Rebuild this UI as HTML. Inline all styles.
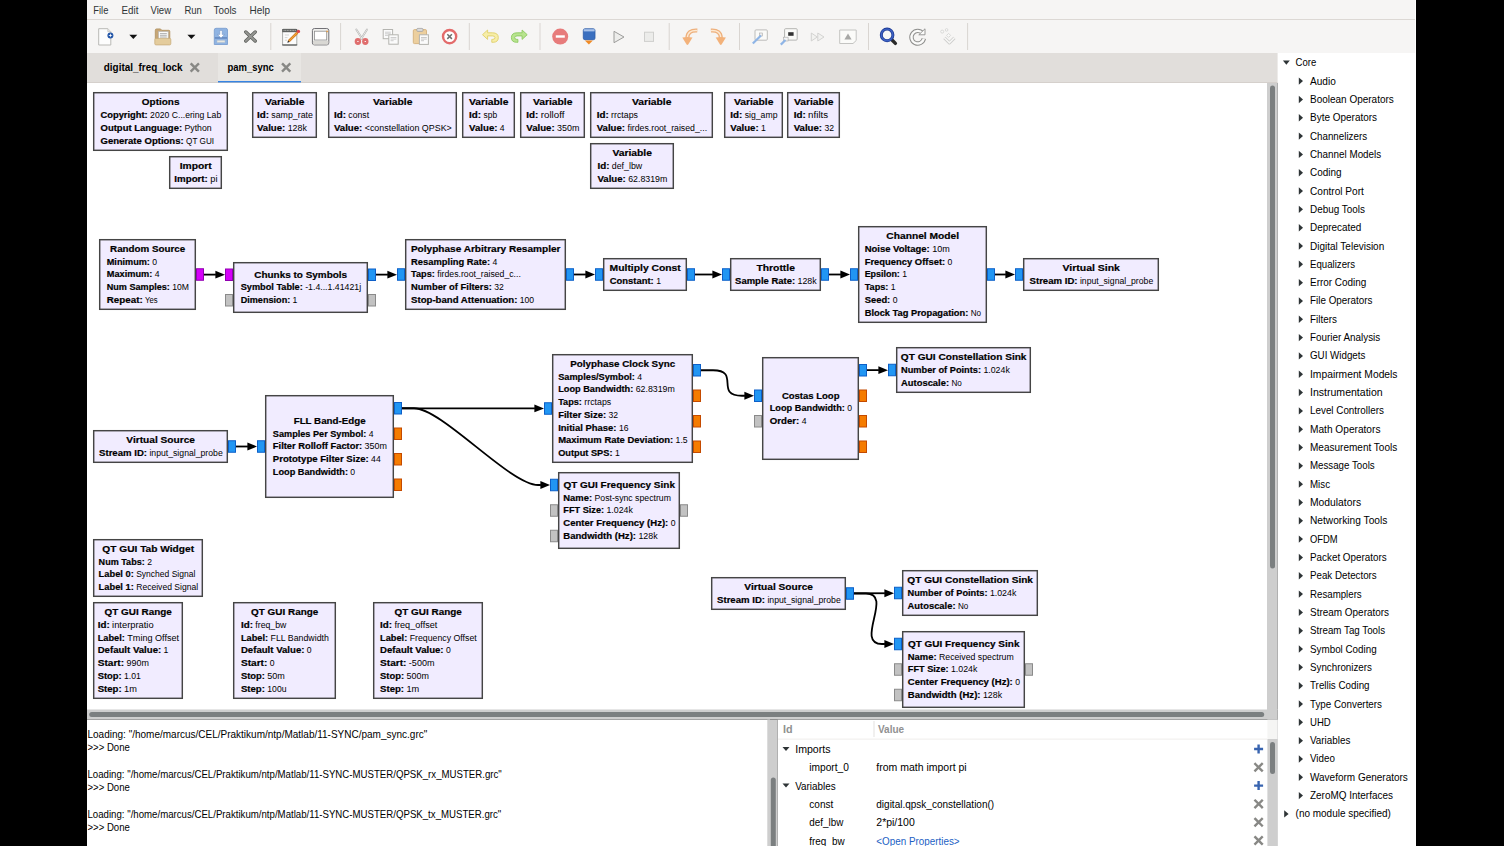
<!DOCTYPE html>
<html><head><meta charset="utf-8"><style>
html,body{margin:0;padding:0;background:#000;width:1504px;height:846px;overflow:hidden}
svg{display:block;font-family:"Liberation Sans",sans-serif}
</style></head><body>
<svg width="1504" height="846" viewBox="0 0 1504 846">
<rect x="0" y="0" width="1504" height="846" fill="#000"/>
<rect x="87" y="0" width="1329" height="53" fill="#f6f5f4"/>
<rect x="87" y="19" width="1329" height="1" fill="#dcd8d4"/>
<text x="93.30" y="13.60" font-size="10.1" fill="#2e3436" textLength="15.07" lengthAdjust="spacingAndGlyphs">File</text>
<text x="121.50" y="13.60" font-size="10.1" fill="#2e3436" textLength="16.87" lengthAdjust="spacingAndGlyphs">Edit</text>
<text x="150.50" y="13.60" font-size="10.1" fill="#2e3436" textLength="20.63" lengthAdjust="spacingAndGlyphs">View</text>
<text x="184.40" y="13.60" font-size="10.1" fill="#2e3436" textLength="17.52" lengthAdjust="spacingAndGlyphs">Run</text>
<text x="213.60" y="13.60" font-size="10.1" fill="#2e3436" textLength="22.93" lengthAdjust="spacingAndGlyphs">Tools</text>
<text x="249.50" y="13.60" font-size="10.1" fill="#2e3436" textLength="20.53" lengthAdjust="spacingAndGlyphs">Help</text>
<rect x="270.3" y="23" width="1" height="27" fill="#d9d5d1"/>
<rect x="340.1" y="23" width="1" height="27" fill="#d9d5d1"/>
<rect x="468.8" y="23" width="1" height="27" fill="#d9d5d1"/>
<rect x="539.5" y="23" width="1" height="27" fill="#d9d5d1"/>
<rect x="668.7" y="23" width="1" height="27" fill="#d9d5d1"/>
<rect x="739.0" y="23" width="1" height="27" fill="#d9d5d1"/>
<rect x="868.0" y="23" width="1" height="27" fill="#d9d5d1"/>
<rect x="967.1" y="23" width="1" height="27" fill="#d9d5d1"/>
<path d="M98.7,28.7 H107.8 L110.8,31.7 V45 H98.7 Z" fill="#fdfdfd" stroke="#b9b9b5" stroke-width="1"/>
<path d="M107.8,28.7 V31.7 H110.8" fill="#e8e8e6" stroke="#c4c4c0" stroke-width="0.8"/>
<circle cx="110.4" cy="35.4" r="3" fill="#2356a8"/>
<path d="M110.4,33.2 L110.9,34.9 L112.6,35.4 L110.9,35.9 L110.4,37.6 L109.9,35.9 L108.2,35.4 L109.9,34.9 Z" fill="#fff"/>
<path d="M129.3,34.8 H137.3 L133.3,39.1 Z" fill="#111"/>
<path d="M187.4,34.8 H195.4 L191.4,39.1 Z" fill="#111"/>
<path d="M155.3,30.3 Q155.3,28.9 156.5,28.9 H160.5 L161.8,30.3 H168.8 Q169.8,30.3 169.8,31.3 V39 H155.3 Z" fill="#c6a677" stroke="#b0915f" stroke-width="0.8"/>
<rect x="158.6" y="31.6" width="9.6" height="7.6" fill="#fafafa" stroke="#b8b8b8" stroke-width="0.6"/>
<path d="M160,33.6 H166.8 M160,35.3 H166.8 M160,37 H166.8" stroke="#9d9d9d" stroke-width="0.8"/>
<path d="M154.8,39.5 Q154.8,38.4 156,38.4 H169.8 Q170.8,38.4 170.8,39.5 V43.8 Q170.8,44.9 169.6,44.9 H156 Q154.8,44.9 154.8,43.8 Z" fill="#e4cc9c" stroke="#c9ad7c" stroke-width="0.8"/>
<path d="M214.3,30 Q214.3,28.3 216,28.3 H225.8 Q227.5,28.3 227.5,30 V44.5 H214.3 Z" fill="#90b4e2" stroke="#7d9fd0" stroke-width="0.9"/>
<rect x="214.8" y="37.3" width="12.2" height="1.3" fill="#5b7fb8"/>
<path d="M219.8,30.4 H222.2 V34.4 H224.6 L221,38 L217.4,34.4 H219.8 Z" fill="#fff" stroke="#6a8cc0" stroke-width="0.5"/>
<rect x="217" y="40.2" width="8" height="2.4" fill="#e8e8e0" stroke="#a9bad0" stroke-width="0.5"/>
<path d="M245.8,32 L255.2,41 M255.2,32 L245.8,41" stroke="#5d5f5b" stroke-width="3.4" stroke-linecap="round"/>
<path d="M245.8,32 L255.2,41 M255.2,32 L245.8,41" stroke="#959692" stroke-width="1.8" stroke-linecap="round"/>
<rect x="282.6" y="29.2" width="14.2" height="16" rx="0.8" fill="#fcfcfc" stroke="#a9aba8" stroke-width="1"/>
<rect x="282.2" y="29" width="15" height="3.2" fill="#5f6160"/>
<path d="M283.6,30.4 H296" stroke="#c9cbc8" stroke-width="0.8" stroke-dasharray="1,0.6"/>
<rect x="282.2" y="44.4" width="15" height="1.1" fill="#4f5150"/>
<path d="M284.8,35 H289 M284.8,37.6 H287.5 M284.8,40.2 H287" stroke="#c3c3c3" stroke-width="0.7"/>
<path d="M288.8,41.2 L297.4,32.6" stroke="#c06a10" stroke-width="2.6"/>
<path d="M288.8,41.2 L297.4,32.6" stroke="#f2a23a" stroke-width="1.4"/>
<circle cx="298.4" cy="31.4" r="1.7" fill="#e0454a"/>
<path d="M287.3,42.8 L288,40.4 L289.7,42.1 Z" fill="#222"/>
<rect x="312.4" y="28.5" width="16.4" height="16.4" rx="2" fill="#f0f0ee" stroke="#727176" stroke-width="1"/>
<rect x="314.5" y="31.2" width="12.2" height="8.8" fill="#fff" stroke="#8e8e8e" stroke-width="0.8"/>
<rect x="313" y="41" width="15.3" height="3.5" fill="#d9d8d4"/>
<rect x="326.4" y="30.7" width="1.5" height="1.5" fill="#f0a040"/>
<path d="M356.3,29.5 L362.2,38.8 M367,29.5 L361.2,38.8" stroke="#b0b0ae" stroke-width="1.8" stroke-linecap="round"/>
<path d="M356.3,29.5 L362.2,38.8 M367,29.5 L361.2,38.8" stroke="#f4f4f2" stroke-width="0.8" stroke-linecap="round"/>
<ellipse cx="357.9" cy="41.5" rx="3.2" ry="3.4" fill="#e06e6e"/>
<ellipse cx="365.3" cy="41.5" rx="3.2" ry="3.4" fill="#e06e6e"/>
<rect x="357.2" y="41" width="1.4" height="0.9" fill="#fff"/><rect x="364.6" y="41" width="1.4" height="0.9" fill="#fff"/>
<rect x="383.2" y="29.5" width="9.4" height="9.2" fill="#fbfbfb" stroke="#b4b4b0" stroke-width="1"/>
<path d="M385,32.2 H390.8 M385,33.8 H390.8 M385,35.4 H388" stroke="#c8c8c8" stroke-width="0.9"/>
<rect x="388.8" y="34.8" width="9.4" height="9.4" fill="#fbfbfb" stroke="#b4b4b0" stroke-width="1"/>
<path d="M390.6,37.5 H396.4 M390.6,39.1 H396.4 M390.6,40.7 H393.6" stroke="#c8c8c8" stroke-width="0.9"/>
<rect x="413.3" y="29.6" width="13.2" height="14" rx="1.2" fill="#eccf9e" stroke="#d4b07a" stroke-width="0.9"/>
<rect x="416.8" y="28.4" width="6.2" height="3" rx="1" fill="#dcdcdc" stroke="#999" stroke-width="0.7"/>
<rect x="419.4" y="34.8" width="9" height="9.6" fill="#fbfbfb" stroke="#b4b4b0" stroke-width="1"/>
<path d="M421,37.5 H426.8 M421,39.1 H426.8 M421,40.7 H424" stroke="#c4c4c4" stroke-width="0.9"/>
<circle cx="449.6" cy="36.6" r="6.6" fill="#fff" stroke="#e36b6b" stroke-width="2.4"/>
<path d="M447.3,34.3 L451.9,38.9 M451.9,34.3 L447.3,38.9" stroke="#6e6e6e" stroke-width="1.5"/>
<path d="M482.5,34.7 L487.6,30 V32.8 H492.5 Q498.3,32.8 498.3,37.6 Q498.3,42.3 493,42.3 H491.8 V39.4 H492.8 Q495,39.4 495,37.6 Q495,35.9 492.6,35.9 H487.6 V39.4 Z" fill="#f7eea8" stroke="#e0cf6a" stroke-width="0.9"/>
<path d="M527.2,34.7 L522.1,30 V32.8 H517.2 Q511.4,32.8 511.4,37.6 Q511.4,42.3 516.7,42.3 H517.9 V39.4 H516.9 Q514.7,39.4 514.7,37.6 Q514.7,35.9 517.1,35.9 H522.1 V39.4 Z" fill="#b8e48e" stroke="#8cc860" stroke-width="0.9"/>
<circle cx="560.2" cy="36.6" r="8" fill="#e77b7b"/>
<rect x="555.8" y="35.3" width="9" height="2.4" fill="#fff"/>
<rect x="583.3" y="28.8" width="11.7" height="10.9" rx="1.6" fill="#3a6fbf" stroke="#2b5aa6" stroke-width="0.8"/>
<rect x="583.7" y="29.2" width="10.9" height="2.2" fill="#a9c3ea"/>
<path d="M584.9,40.6 H592.9 L588.9,44.6 Z" fill="#f08a24"/>
<path d="M614,31.3 L624,37 L614,42.7 Z" fill="#ededeb" stroke="#9c9c9a" stroke-width="1"/>
<rect x="644.5" y="32.2" width="9" height="9.2" fill="#ececea" stroke="#cfcfcd" stroke-width="1"/>
<path d="M697.3,30.6 Q687.4,30 687.4,38" fill="none" stroke="#eeb07c" stroke-width="4"/>
<path d="M697.3,30.6 Q687.4,30 687.4,38" fill="none" stroke="#fde9d2" stroke-width="1.4"/>
<path d="M682.3,37.6 Q687.4,36.2 692.5,37.6 L688.2,44.6 Q687.4,45.4 686.6,44.6 Z" fill="#f3b27a"/>
<path d="M710.9,30.6 Q720.8,30 720.8,38" fill="none" stroke="#eeb07c" stroke-width="4"/>
<path d="M710.9,30.6 Q720.8,30 720.8,38" fill="none" stroke="#fde9d2" stroke-width="1.4"/>
<path d="M715.7,37.6 Q720.8,36.2 725.9,37.6 L721.6,44.6 Q720.8,45.4 720,44.6 Z" fill="#f3b27a"/>
<rect x="755" y="29.9" width="12.3" height="10.3" rx="1" fill="#fafaf8" stroke="#bcbcba" stroke-width="1"/>
<rect x="759.5" y="33" width="3" height="3" fill="#eee" stroke="#aaa" stroke-width="0.6"/>
<path d="M752.8,43.5 L761,35.5" stroke="#8fb5e6" stroke-width="2.2"/>
<rect x="784.6" y="28.7" width="12.6" height="11.4" rx="1" fill="#fafaf8" stroke="#b4b4b2" stroke-width="1"/>
<rect x="788.2" y="32.2" width="5.4" height="3.6" fill="#333"/>
<rect x="783.5" y="37.2" width="4.6" height="3.8" fill="#f4f4f4" stroke="#aaa" stroke-width="0.6"/>
<path d="M780.8,44.6 L785.5,40" stroke="#8fb5e6" stroke-width="2.2"/>
<path d="M811.3,33 L817.3,37 L811.3,41 Z M817.8,33 L824,37 L817.8,41 Z" fill="#f2f2f0" stroke="#cfcfcd" stroke-width="0.9"/>
<path d="M839.7,30 H856.2 V40.5 L853,43.5 H839.7 Z" fill="#fbfbf9" stroke="#c4c4c2" stroke-width="1"/>
<path d="M848,33.4 L851.6,39.6 H844.4 Z" fill="#a8a8a6"/>
<path d="M891.8,39.7 L895.4,43.4" stroke="#2a2a2a" stroke-width="3.4" stroke-linecap="round"/>
<circle cx="887.1" cy="34.9" r="5.8" fill="#f7f7f6" stroke="#1f3c96" stroke-width="3"/>
<circle cx="887.1" cy="34.9" r="5.8" fill="none" stroke="#3d62c4" stroke-width="1.4"/>
<path d="M922.6,33.2 A6.3,6.3 0 1 0 923.9,38.6" fill="none" stroke="#8f8f8d" stroke-width="4.4"/>
<path d="M922.6,33.2 A6.3,6.3 0 1 0 923.9,38.6" fill="none" stroke="#fbfbfa" stroke-width="2.4"/>
<path d="M918.8,34.8 L925,34.8 L925,28.8 Z" fill="#fbfbfa" stroke="#8f8f8d" stroke-width="0.9" stroke-linejoin="round"/>
<circle cx="942.2" cy="31.6" r="1.5" fill="#f8f8f7" stroke="#d2d2d0" stroke-width="0.8"/>
<circle cx="946.6" cy="29.9" r="1.3" fill="#f8f8f7" stroke="#d2d2d0" stroke-width="0.8"/>
<path d="M948.6,33.4 L950.6,35.4 L948.6,37.4 L946.6,35.4 Z" fill="#f8f8f7" stroke="#d2d2d0" stroke-width="0.8"/>
<path d="M944.4,37.8 L949.4,42.8 L954.4,37.8" fill="none" stroke="#cfcfcd" stroke-width="3.2" stroke-linejoin="round"/>
<path d="M944.4,37.8 L949.4,42.8 L954.4,37.8" fill="none" stroke="#f8f8f7" stroke-width="1.4"/>
<rect x="87" y="53" width="1191" height="30" fill="#e1dedb"/>
<rect x="218" y="53" width="83" height="30" fill="#e8e6e3"/>
<rect x="218" y="81" width="83" height="2" fill="#3584e4"/>
<rect x="87" y="82" width="1191" height="1" fill="#cdc7c2" opacity="0.6"/>
<text x="103.80" y="71.20" font-size="10.1" font-weight="bold" fill="#000" textLength="78.80" lengthAdjust="spacingAndGlyphs">digital_freq_lock</text>
<text x="227.40" y="71.20" font-size="10.1" font-weight="bold" fill="#000" textLength="46.40" lengthAdjust="spacingAndGlyphs">pam_sync</text>
<path d="M191.5,64.2 L198.10000000000002,70.8 M198.10000000000002,64.2 L191.5,70.8" stroke="#888885" stroke-width="2.4" stroke-linecap="square"/>
<path d="M282.9,64.2 L289.5,70.8 M289.5,64.2 L282.9,70.8" stroke="#888885" stroke-width="2.4" stroke-linecap="square"/>
<rect x="87" y="83" width="1180" height="627" fill="#fff"/>
<rect x="1267" y="83" width="10.6" height="627" fill="#cecece"/>
<rect x="1270" y="85.5" width="5" height="483" rx="2.5" fill="#7b7f80"/>
<rect x="87" y="709.5" width="1190.6" height="10" fill="#cecece"/>
<rect x="89.2" y="712" width="1175" height="5" rx="2.5" fill="#7b7f80"/>
<rect x="93.7" y="92.7" width="133.6" height="57.6" fill="#f1ecff" stroke="#454545" stroke-width="1.45"/>
<rect x="169.7" y="156.7" width="51.6" height="31.6" fill="#f1ecff" stroke="#454545" stroke-width="1.45"/>
<rect x="252.7" y="92.7" width="63.6" height="44.6" fill="#f1ecff" stroke="#454545" stroke-width="1.45"/>
<rect x="328.7" y="92.7" width="127.6" height="44.6" fill="#f1ecff" stroke="#454545" stroke-width="1.45"/>
<rect x="462.7" y="92.7" width="51.6" height="44.6" fill="#f1ecff" stroke="#454545" stroke-width="1.45"/>
<rect x="520.7" y="92.7" width="63.6" height="44.6" fill="#f1ecff" stroke="#454545" stroke-width="1.45"/>
<rect x="590.7" y="92.7" width="121.6" height="44.6" fill="#f1ecff" stroke="#454545" stroke-width="1.45"/>
<rect x="590.7" y="143.7" width="82.6" height="44.6" fill="#f1ecff" stroke="#454545" stroke-width="1.45"/>
<rect x="724.7" y="92.7" width="57.6" height="44.6" fill="#f1ecff" stroke="#454545" stroke-width="1.45"/>
<rect x="787.7" y="92.7" width="51.6" height="44.6" fill="#f1ecff" stroke="#454545" stroke-width="1.45"/>
<rect x="99.7" y="239.7" width="95.6" height="69.6" fill="#f1ecff" stroke="#454545" stroke-width="1.45"/>
<rect x="233.7" y="262.7" width="133.6" height="49.6" fill="#f1ecff" stroke="#454545" stroke-width="1.45"/>
<rect x="405.7" y="239.7" width="159.6" height="69.6" fill="#f1ecff" stroke="#454545" stroke-width="1.45"/>
<rect x="603.7" y="258.7" width="82.6" height="31.6" fill="#f1ecff" stroke="#454545" stroke-width="1.45"/>
<rect x="730.7" y="258.7" width="89.6" height="31.6" fill="#f1ecff" stroke="#454545" stroke-width="1.45"/>
<rect x="858.7" y="226.7" width="127.6" height="95.6" fill="#f1ecff" stroke="#454545" stroke-width="1.45"/>
<rect x="1023.7" y="258.7" width="134.6" height="31.6" fill="#f1ecff" stroke="#454545" stroke-width="1.45"/>
<rect x="93.7" y="430.7" width="133.6" height="31.6" fill="#f1ecff" stroke="#454545" stroke-width="1.45"/>
<rect x="265.7" y="395.7" width="127.6" height="101.6" fill="#f1ecff" stroke="#454545" stroke-width="1.45"/>
<rect x="552.7" y="354.7" width="139.6" height="107.6" fill="#f1ecff" stroke="#454545" stroke-width="1.45"/>
<rect x="762.7" y="357.7" width="95.6" height="101.6" fill="#f1ecff" stroke="#454545" stroke-width="1.45"/>
<rect x="896.7" y="347.7" width="133.6" height="44.6" fill="#f1ecff" stroke="#454545" stroke-width="1.45"/>
<rect x="558.7" y="472.7" width="120.6" height="75.6" fill="#f1ecff" stroke="#454545" stroke-width="1.45"/>
<rect x="93.7" y="539.7" width="108.6" height="56.6" fill="#f1ecff" stroke="#454545" stroke-width="1.45"/>
<rect x="93.7" y="602.7" width="88.6" height="95.6" fill="#f1ecff" stroke="#454545" stroke-width="1.45"/>
<rect x="233.7" y="602.7" width="101.6" height="95.6" fill="#f1ecff" stroke="#454545" stroke-width="1.45"/>
<rect x="373.7" y="602.7" width="108.6" height="95.6" fill="#f1ecff" stroke="#454545" stroke-width="1.45"/>
<rect x="711.7" y="577.7" width="133.6" height="31.6" fill="#f1ecff" stroke="#454545" stroke-width="1.45"/>
<rect x="902.7" y="570.7" width="134.6" height="44.6" fill="#f1ecff" stroke="#454545" stroke-width="1.45"/>
<rect x="902.7" y="631.7" width="121.6" height="75.6" fill="#f1ecff" stroke="#454545" stroke-width="1.45"/>
<path d="M204.0,274.625 L215.9,274.625" fill="none" stroke="#000" stroke-width="1.8"/>
<path d="M225.0,274.625 L215.4,270.725 L215.4,278.525 Z" fill="#000"/>
<path d="M376.0,274.625 L387.9,274.625" fill="none" stroke="#000" stroke-width="1.8"/>
<path d="M397.0,274.625 L387.4,270.725 L387.4,278.525 Z" fill="#000"/>
<path d="M574.0,274.5 L585.9,274.5" fill="none" stroke="#000" stroke-width="1.8"/>
<path d="M595.0,274.5 L585.4,270.6 L585.4,278.4 Z" fill="#000"/>
<path d="M695.0,274.5 L712.9,274.5" fill="none" stroke="#000" stroke-width="1.8"/>
<path d="M722.0,274.5 L712.4,270.6 L712.4,278.4 Z" fill="#000"/>
<path d="M829.0,274.5 L840.9,274.5" fill="none" stroke="#000" stroke-width="1.8"/>
<path d="M850.0,274.5 L840.4,270.6 L840.4,278.4 Z" fill="#000"/>
<path d="M995.0,274.5 L1005.9,274.5" fill="none" stroke="#000" stroke-width="1.8"/>
<path d="M1015.0,274.5 L1005.4,270.6 L1005.4,278.4 Z" fill="#000"/>
<path d="M236.0,446.5 L247.9,446.5" fill="none" stroke="#000" stroke-width="1.8"/>
<path d="M257.0,446.5 L247.4,442.6 L247.4,450.4 Z" fill="#000"/>
<path d="M402.0,408.375 L534.9,408.375" fill="none" stroke="#000" stroke-width="1.8"/>
<path d="M544.0,408.375 L534.4,404.475 L534.4,412.275 Z" fill="#000"/>
<path d="M402.0,408.25 L414.0,408.25 C442.0,408.25 510.0,485.0 538.0,485.0 L540.9,485.0" fill="none" stroke="#000" stroke-width="1.8"/>
<path d="M550.0,485.0 L540.4,481.1 L540.4,488.9 Z" fill="#000"/>
<path d="M701.0,370.25 L713.0,370.25 C741.0,370.25 714.0,395.75 742.0,395.75 L744.9,395.75" fill="none" stroke="#000" stroke-width="1.8"/>
<path d="M754.0,395.75 L744.4,391.85 L744.4,399.65 Z" fill="#000"/>
<path d="M867.0,370.125 L878.9,370.125" fill="none" stroke="#000" stroke-width="1.8"/>
<path d="M888.0,370.125 L878.4,366.225 L878.4,374.025 Z" fill="#000"/>
<path d="M854.0,593.25 L884.9,593.25" fill="none" stroke="#000" stroke-width="1.8"/>
<path d="M894.0,593.25 L884.4,589.35 L884.4,597.15 Z" fill="#000"/>
<path d="M854.0,593.5 L866.0,593.5 C894.0,593.5 854.0,644.0 882.0,644.0 L884.9,644.0" fill="none" stroke="#000" stroke-width="1.8"/>
<path d="M894.0,644.0 L884.4,640.1 L884.4,647.9 Z" fill="#000"/>
<rect x="196.5" y="268.75" width="7.0" height="11.5" fill="#d500f9" stroke="#9000b0" stroke-width="1"/>
<rect x="225.5" y="269.0" width="7.0" height="11.5" fill="#d500f9" stroke="#9000b0" stroke-width="1"/>
<rect x="225.5" y="294.5" width="7.0" height="11.5" fill="#c2c2c2" stroke="#8a8a8a" stroke-width="1"/>
<rect x="368.5" y="269.0" width="7.0" height="11.5" fill="#2196f3" stroke="#0d5fc8" stroke-width="1"/>
<rect x="368.5" y="294.5" width="7.0" height="11.5" fill="#c2c2c2" stroke="#8a8a8a" stroke-width="1"/>
<rect x="397.5" y="268.75" width="7.0" height="11.5" fill="#2196f3" stroke="#0d5fc8" stroke-width="1"/>
<rect x="566.5" y="268.75" width="7.0" height="11.5" fill="#2196f3" stroke="#0d5fc8" stroke-width="1"/>
<rect x="595.5" y="268.75" width="7.0" height="11.5" fill="#2196f3" stroke="#0d5fc8" stroke-width="1"/>
<rect x="687.5" y="268.75" width="7.0" height="11.5" fill="#2196f3" stroke="#0d5fc8" stroke-width="1"/>
<rect x="722.5" y="268.75" width="7.0" height="11.5" fill="#2196f3" stroke="#0d5fc8" stroke-width="1"/>
<rect x="821.5" y="268.75" width="7.0" height="11.5" fill="#2196f3" stroke="#0d5fc8" stroke-width="1"/>
<rect x="850.5" y="268.75" width="7.0" height="11.5" fill="#2196f3" stroke="#0d5fc8" stroke-width="1"/>
<rect x="987.5" y="268.75" width="7.0" height="11.5" fill="#2196f3" stroke="#0d5fc8" stroke-width="1"/>
<rect x="1015.5" y="268.75" width="7.0" height="11.5" fill="#2196f3" stroke="#0d5fc8" stroke-width="1"/>
<rect x="228.5" y="440.75" width="7.0" height="11.5" fill="#2196f3" stroke="#0d5fc8" stroke-width="1"/>
<rect x="257.5" y="440.75" width="7.0" height="11.5" fill="#2196f3" stroke="#0d5fc8" stroke-width="1"/>
<rect x="394.5" y="402.5" width="7.0" height="11.5" fill="#2196f3" stroke="#0d5fc8" stroke-width="1"/>
<rect x="394.5" y="428.0" width="7.0" height="11.5" fill="#f57c00" stroke="#c44a00" stroke-width="1"/>
<rect x="394.5" y="453.5" width="7.0" height="11.5" fill="#f57c00" stroke="#c44a00" stroke-width="1"/>
<rect x="394.5" y="479.0" width="7.0" height="11.5" fill="#f57c00" stroke="#c44a00" stroke-width="1"/>
<rect x="544.5" y="402.75" width="7.0" height="11.5" fill="#2196f3" stroke="#0d5fc8" stroke-width="1"/>
<rect x="693.5" y="364.5" width="7.0" height="11.5" fill="#2196f3" stroke="#0d5fc8" stroke-width="1"/>
<rect x="693.5" y="390.0" width="7.0" height="11.5" fill="#f57c00" stroke="#c44a00" stroke-width="1"/>
<rect x="693.5" y="415.5" width="7.0" height="11.5" fill="#f57c00" stroke="#c44a00" stroke-width="1"/>
<rect x="693.5" y="441.0" width="7.0" height="11.5" fill="#f57c00" stroke="#c44a00" stroke-width="1"/>
<rect x="754.5" y="390.0" width="7.0" height="11.5" fill="#2196f3" stroke="#0d5fc8" stroke-width="1"/>
<rect x="754.5" y="415.5" width="7.0" height="11.5" fill="#c2c2c2" stroke="#8a8a8a" stroke-width="1"/>
<rect x="859.5" y="364.5" width="7.0" height="11.5" fill="#2196f3" stroke="#0d5fc8" stroke-width="1"/>
<rect x="859.5" y="390.0" width="7.0" height="11.5" fill="#f57c00" stroke="#c44a00" stroke-width="1"/>
<rect x="859.5" y="415.5" width="7.0" height="11.5" fill="#f57c00" stroke="#c44a00" stroke-width="1"/>
<rect x="859.5" y="441.0" width="7.0" height="11.5" fill="#f57c00" stroke="#c44a00" stroke-width="1"/>
<rect x="888.5" y="364.25" width="7.0" height="11.5" fill="#2196f3" stroke="#0d5fc8" stroke-width="1"/>
<rect x="550.5" y="479.25" width="7.0" height="11.5" fill="#2196f3" stroke="#0d5fc8" stroke-width="1"/>
<rect x="550.5" y="504.75" width="7.0" height="11.5" fill="#c2c2c2" stroke="#8a8a8a" stroke-width="1"/>
<rect x="550.5" y="530.25" width="7.0" height="11.5" fill="#c2c2c2" stroke="#8a8a8a" stroke-width="1"/>
<rect x="680.5" y="504.75" width="7.0" height="11.5" fill="#c2c2c2" stroke="#8a8a8a" stroke-width="1"/>
<rect x="846.5" y="587.75" width="7.0" height="11.5" fill="#2196f3" stroke="#0d5fc8" stroke-width="1"/>
<rect x="894.5" y="587.25" width="7.0" height="11.5" fill="#2196f3" stroke="#0d5fc8" stroke-width="1"/>
<rect x="894.5" y="638.25" width="7.0" height="11.5" fill="#2196f3" stroke="#0d5fc8" stroke-width="1"/>
<rect x="894.5" y="663.75" width="7.0" height="11.5" fill="#c2c2c2" stroke="#8a8a8a" stroke-width="1"/>
<rect x="894.5" y="689.25" width="7.0" height="11.5" fill="#c2c2c2" stroke="#8a8a8a" stroke-width="1"/>
<rect x="1025.5" y="663.75" width="7.0" height="11.5" fill="#c2c2c2" stroke="#8a8a8a" stroke-width="1"/>
<text x="141.89" y="105.28" font-size="8.9" font-weight="bold" stroke="#000" stroke-width="0.18" fill="#000" textLength="37.61" lengthAdjust="spacingAndGlyphs">Options</text>
<text x="100.56" y="118.03" font-size="8.5" font-weight="bold" stroke="#000" stroke-width="0.18" fill="#000" textLength="47.15" lengthAdjust="spacingAndGlyphs">Copyright:</text>
<text x="150.11" y="118.03" font-size="8.5" fill="#000" textLength="71.13" lengthAdjust="spacingAndGlyphs">2020 C...ering Lab</text>
<text x="100.56" y="130.78" font-size="8.5" font-weight="bold" stroke="#000" stroke-width="0.18" fill="#000" textLength="81.51" lengthAdjust="spacingAndGlyphs">Output Language:</text>
<text x="184.48" y="130.78" font-size="8.5" fill="#000" textLength="27.18" lengthAdjust="spacingAndGlyphs">Python</text>
<text x="100.56" y="143.53" font-size="8.5" font-weight="bold" stroke="#000" stroke-width="0.18" fill="#000" textLength="83.10" lengthAdjust="spacingAndGlyphs">Generate Options:</text>
<text x="186.07" y="143.53" font-size="8.5" fill="#000" textLength="27.98" lengthAdjust="spacingAndGlyphs">QT GUI</text>
<text x="179.70" y="169.03" font-size="8.9" font-weight="bold" stroke="#000" stroke-width="0.18" fill="#000" textLength="32.00" lengthAdjust="spacingAndGlyphs">Import</text>
<text x="174.32" y="181.78" font-size="8.5" font-weight="bold" stroke="#000" stroke-width="0.18" fill="#000" textLength="33.56" lengthAdjust="spacingAndGlyphs">Import:</text>
<text x="210.29" y="181.78" font-size="8.5" fill="#000" textLength="7.19" lengthAdjust="spacingAndGlyphs">pi</text>
<text x="264.93" y="105.15" font-size="8.9" font-weight="bold" stroke="#000" stroke-width="0.18" fill="#000" textLength="39.55" lengthAdjust="spacingAndGlyphs">Variable</text>
<text x="256.92" y="117.90" font-size="8.5" font-weight="bold" stroke="#000" stroke-width="0.18" fill="#000" textLength="12.00" lengthAdjust="spacingAndGlyphs">Id:</text>
<text x="271.32" y="117.90" font-size="8.5" fill="#000" textLength="41.56" lengthAdjust="spacingAndGlyphs">samp_rate</text>
<text x="256.92" y="130.65" font-size="8.5" font-weight="bold" stroke="#000" stroke-width="0.18" fill="#000" textLength="28.34" lengthAdjust="spacingAndGlyphs">Value:</text>
<text x="287.67" y="130.65" font-size="8.5" fill="#000" textLength="19.19" lengthAdjust="spacingAndGlyphs">128k</text>
<text x="372.93" y="105.15" font-size="8.9" font-weight="bold" stroke="#000" stroke-width="0.18" fill="#000" textLength="39.55" lengthAdjust="spacingAndGlyphs">Variable</text>
<text x="333.97" y="117.90" font-size="8.5" font-weight="bold" stroke="#000" stroke-width="0.18" fill="#000" textLength="12.00" lengthAdjust="spacingAndGlyphs">Id:</text>
<text x="348.37" y="117.90" font-size="8.5" fill="#000" textLength="20.78" lengthAdjust="spacingAndGlyphs">const</text>
<text x="333.97" y="130.65" font-size="8.5" font-weight="bold" stroke="#000" stroke-width="0.18" fill="#000" textLength="28.34" lengthAdjust="spacingAndGlyphs">Value:</text>
<text x="364.72" y="130.65" font-size="8.5" fill="#000" textLength="87.10" lengthAdjust="spacingAndGlyphs">&lt;constellation QPSK&gt;</text>
<text x="468.93" y="105.15" font-size="8.9" font-weight="bold" stroke="#000" stroke-width="0.18" fill="#000" textLength="39.55" lengthAdjust="spacingAndGlyphs">Variable</text>
<text x="469.13" y="117.90" font-size="8.5" font-weight="bold" stroke="#000" stroke-width="0.18" fill="#000" textLength="12.00" lengthAdjust="spacingAndGlyphs">Id:</text>
<text x="483.53" y="117.90" font-size="8.5" fill="#000" textLength="13.60" lengthAdjust="spacingAndGlyphs">spb</text>
<text x="469.13" y="130.65" font-size="8.5" font-weight="bold" stroke="#000" stroke-width="0.18" fill="#000" textLength="28.34" lengthAdjust="spacingAndGlyphs">Value:</text>
<text x="499.87" y="130.65" font-size="8.5" fill="#000" textLength="4.81" lengthAdjust="spacingAndGlyphs">4</text>
<text x="532.93" y="105.15" font-size="8.9" font-weight="bold" stroke="#000" stroke-width="0.18" fill="#000" textLength="39.55" lengthAdjust="spacingAndGlyphs">Variable</text>
<text x="526.34" y="117.90" font-size="8.5" font-weight="bold" stroke="#000" stroke-width="0.18" fill="#000" textLength="12.00" lengthAdjust="spacingAndGlyphs">Id:</text>
<text x="540.74" y="117.90" font-size="8.5" fill="#000" textLength="23.68" lengthAdjust="spacingAndGlyphs">rolloff</text>
<text x="526.34" y="130.65" font-size="8.5" font-weight="bold" stroke="#000" stroke-width="0.18" fill="#000" textLength="28.34" lengthAdjust="spacingAndGlyphs">Value:</text>
<text x="557.09" y="130.65" font-size="8.5" fill="#000" textLength="22.38" lengthAdjust="spacingAndGlyphs">350m</text>
<text x="631.93" y="105.15" font-size="8.9" font-weight="bold" stroke="#000" stroke-width="0.18" fill="#000" textLength="39.55" lengthAdjust="spacingAndGlyphs">Variable</text>
<text x="596.73" y="117.90" font-size="8.5" font-weight="bold" stroke="#000" stroke-width="0.18" fill="#000" textLength="12.00" lengthAdjust="spacingAndGlyphs">Id:</text>
<text x="611.13" y="117.90" font-size="8.5" fill="#000" textLength="26.87" lengthAdjust="spacingAndGlyphs">rrctaps</text>
<text x="596.73" y="130.65" font-size="8.5" font-weight="bold" stroke="#000" stroke-width="0.18" fill="#000" textLength="28.34" lengthAdjust="spacingAndGlyphs">Value:</text>
<text x="627.48" y="130.65" font-size="8.5" fill="#000" textLength="79.60" lengthAdjust="spacingAndGlyphs">firdes.root_raised_...</text>
<text x="612.43" y="156.15" font-size="8.9" font-weight="bold" stroke="#000" stroke-width="0.18" fill="#000" textLength="39.55" lengthAdjust="spacingAndGlyphs">Variable</text>
<text x="597.44" y="168.90" font-size="8.5" font-weight="bold" stroke="#000" stroke-width="0.18" fill="#000" textLength="12.00" lengthAdjust="spacingAndGlyphs">Id:</text>
<text x="611.84" y="168.90" font-size="8.5" fill="#000" textLength="30.37" lengthAdjust="spacingAndGlyphs">def_lbw</text>
<text x="597.44" y="181.65" font-size="8.5" font-weight="bold" stroke="#000" stroke-width="0.18" fill="#000" textLength="28.34" lengthAdjust="spacingAndGlyphs">Value:</text>
<text x="628.19" y="181.65" font-size="8.5" fill="#000" textLength="39.16" lengthAdjust="spacingAndGlyphs">62.8319m</text>
<text x="733.93" y="105.15" font-size="8.9" font-weight="bold" stroke="#000" stroke-width="0.18" fill="#000" textLength="39.55" lengthAdjust="spacingAndGlyphs">Variable</text>
<text x="730.31" y="117.90" font-size="8.5" font-weight="bold" stroke="#000" stroke-width="0.18" fill="#000" textLength="12.00" lengthAdjust="spacingAndGlyphs">Id:</text>
<text x="744.72" y="117.90" font-size="8.5" fill="#000" textLength="32.77" lengthAdjust="spacingAndGlyphs">sig_amp</text>
<text x="730.31" y="130.65" font-size="8.5" font-weight="bold" stroke="#000" stroke-width="0.18" fill="#000" textLength="28.34" lengthAdjust="spacingAndGlyphs">Value:</text>
<text x="761.06" y="130.65" font-size="8.5" fill="#000" textLength="4.81" lengthAdjust="spacingAndGlyphs">1</text>
<text x="793.93" y="105.15" font-size="8.9" font-weight="bold" stroke="#000" stroke-width="0.18" fill="#000" textLength="39.55" lengthAdjust="spacingAndGlyphs">Variable</text>
<text x="793.73" y="117.90" font-size="8.5" font-weight="bold" stroke="#000" stroke-width="0.18" fill="#000" textLength="12.00" lengthAdjust="spacingAndGlyphs">Id:</text>
<text x="808.13" y="117.90" font-size="8.5" fill="#000" textLength="19.98" lengthAdjust="spacingAndGlyphs">nfilts</text>
<text x="793.73" y="130.65" font-size="8.5" font-weight="bold" stroke="#000" stroke-width="0.18" fill="#000" textLength="28.34" lengthAdjust="spacingAndGlyphs">Value:</text>
<text x="824.48" y="130.65" font-size="8.5" fill="#000" textLength="9.59" lengthAdjust="spacingAndGlyphs">32</text>
<text x="110.09" y="251.90" font-size="8.9" font-weight="bold" stroke="#000" stroke-width="0.18" fill="#000" textLength="75.21" lengthAdjust="spacingAndGlyphs">Random Source</text>
<text x="106.74" y="264.65" font-size="8.5" font-weight="bold" stroke="#000" stroke-width="0.18" fill="#000" textLength="43.16" lengthAdjust="spacingAndGlyphs">Minimum:</text>
<text x="152.30" y="264.65" font-size="8.5" fill="#000" textLength="4.81" lengthAdjust="spacingAndGlyphs">0</text>
<text x="106.74" y="277.40" font-size="8.5" font-weight="bold" stroke="#000" stroke-width="0.18" fill="#000" textLength="45.56" lengthAdjust="spacingAndGlyphs">Maximum:</text>
<text x="154.70" y="277.40" font-size="8.5" fill="#000" textLength="4.81" lengthAdjust="spacingAndGlyphs">4</text>
<text x="106.74" y="290.15" font-size="8.5" font-weight="bold" stroke="#000" stroke-width="0.18" fill="#000" textLength="63.13" lengthAdjust="spacingAndGlyphs">Num Samples:</text>
<text x="172.27" y="290.15" font-size="8.5" fill="#000" textLength="16.79" lengthAdjust="spacingAndGlyphs">10M</text>
<text x="106.74" y="302.90" font-size="8.5" font-weight="bold" stroke="#000" stroke-width="0.18" fill="#000" textLength="35.97" lengthAdjust="spacingAndGlyphs">Repeat:</text>
<text x="145.11" y="302.90" font-size="8.5" fill="#000" textLength="12.53" lengthAdjust="spacingAndGlyphs">Yes</text>
<text x="254.30" y="277.65" font-size="8.9" font-weight="bold" stroke="#000" stroke-width="0.18" fill="#000" textLength="92.80" lengthAdjust="spacingAndGlyphs">Chunks to Symbols</text>
<text x="240.68" y="290.40" font-size="8.5" font-weight="bold" stroke="#000" stroke-width="0.18" fill="#000" textLength="62.10" lengthAdjust="spacingAndGlyphs">Symbol Table:</text>
<text x="305.18" y="290.40" font-size="8.5" fill="#000" textLength="55.94" lengthAdjust="spacingAndGlyphs">-1.4...1.41421j</text>
<text x="240.68" y="303.15" font-size="8.5" font-weight="bold" stroke="#000" stroke-width="0.18" fill="#000" textLength="49.55" lengthAdjust="spacingAndGlyphs">Dimension:</text>
<text x="292.63" y="303.15" font-size="8.5" fill="#000" textLength="4.81" lengthAdjust="spacingAndGlyphs">1</text>
<text x="410.90" y="251.90" font-size="8.9" font-weight="bold" stroke="#000" stroke-width="0.18" fill="#000" textLength="149.60" lengthAdjust="spacingAndGlyphs">Polyphase Arbitrary Resampler</text>
<text x="411.10" y="264.65" font-size="8.5" font-weight="bold" stroke="#000" stroke-width="0.18" fill="#000" textLength="79.11" lengthAdjust="spacingAndGlyphs">Resampling Rate:</text>
<text x="492.61" y="264.65" font-size="8.5" fill="#000" textLength="4.81" lengthAdjust="spacingAndGlyphs">4</text>
<text x="411.10" y="277.40" font-size="8.5" font-weight="bold" stroke="#000" stroke-width="0.18" fill="#000" textLength="23.75" lengthAdjust="spacingAndGlyphs">Taps:</text>
<text x="437.26" y="277.40" font-size="8.5" fill="#000" textLength="83.60" lengthAdjust="spacingAndGlyphs">firdes.root_raised_c...</text>
<text x="411.10" y="290.15" font-size="8.5" font-weight="bold" stroke="#000" stroke-width="0.18" fill="#000" textLength="80.71" lengthAdjust="spacingAndGlyphs">Number of Filters:</text>
<text x="494.22" y="290.15" font-size="8.5" fill="#000" textLength="9.59" lengthAdjust="spacingAndGlyphs">32</text>
<text x="411.10" y="302.90" font-size="8.5" font-weight="bold" stroke="#000" stroke-width="0.18" fill="#000" textLength="106.29" lengthAdjust="spacingAndGlyphs">Stop-band Attenuation:</text>
<text x="519.79" y="302.90" font-size="8.5" fill="#000" textLength="14.38" lengthAdjust="spacingAndGlyphs">100</text>
<text x="609.60" y="271.02" font-size="8.9" font-weight="bold" stroke="#000" stroke-width="0.18" fill="#000" textLength="71.21" lengthAdjust="spacingAndGlyphs">Multiply Const</text>
<text x="609.80" y="283.77" font-size="8.5" font-weight="bold" stroke="#000" stroke-width="0.18" fill="#000" textLength="43.95" lengthAdjust="spacingAndGlyphs">Constant:</text>
<text x="656.15" y="283.77" font-size="8.5" fill="#000" textLength="4.81" lengthAdjust="spacingAndGlyphs">1</text>
<text x="756.50" y="271.02" font-size="8.9" font-weight="bold" stroke="#000" stroke-width="0.18" fill="#000" textLength="38.40" lengthAdjust="spacingAndGlyphs">Throttle</text>
<text x="735.13" y="283.77" font-size="8.5" font-weight="bold" stroke="#000" stroke-width="0.18" fill="#000" textLength="59.94" lengthAdjust="spacingAndGlyphs">Sample Rate:</text>
<text x="797.48" y="283.77" font-size="8.5" fill="#000" textLength="19.19" lengthAdjust="spacingAndGlyphs">128k</text>
<text x="886.30" y="239.15" font-size="8.9" font-weight="bold" stroke="#000" stroke-width="0.18" fill="#000" textLength="72.80" lengthAdjust="spacingAndGlyphs">Channel Model</text>
<text x="864.68" y="251.90" font-size="8.5" font-weight="bold" stroke="#000" stroke-width="0.18" fill="#000" textLength="65.09" lengthAdjust="spacingAndGlyphs">Noise Voltage:</text>
<text x="932.17" y="251.90" font-size="8.5" fill="#000" textLength="17.59" lengthAdjust="spacingAndGlyphs">10m</text>
<text x="864.68" y="264.65" font-size="8.5" font-weight="bold" stroke="#000" stroke-width="0.18" fill="#000" textLength="80.52" lengthAdjust="spacingAndGlyphs">Frequency Offset:</text>
<text x="947.61" y="264.65" font-size="8.5" fill="#000" textLength="4.81" lengthAdjust="spacingAndGlyphs">0</text>
<text x="864.68" y="277.40" font-size="8.5" font-weight="bold" stroke="#000" stroke-width="0.18" fill="#000" textLength="35.16" lengthAdjust="spacingAndGlyphs">Epsilon:</text>
<text x="902.25" y="277.40" font-size="8.5" fill="#000" textLength="4.81" lengthAdjust="spacingAndGlyphs">1</text>
<text x="864.68" y="290.15" font-size="8.5" font-weight="bold" stroke="#000" stroke-width="0.18" fill="#000" textLength="23.75" lengthAdjust="spacingAndGlyphs">Taps:</text>
<text x="890.84" y="290.15" font-size="8.5" fill="#000" textLength="4.81" lengthAdjust="spacingAndGlyphs">1</text>
<text x="864.68" y="302.90" font-size="8.5" font-weight="bold" stroke="#000" stroke-width="0.18" fill="#000" textLength="25.58" lengthAdjust="spacingAndGlyphs">Seed:</text>
<text x="892.67" y="302.90" font-size="8.5" fill="#000" textLength="4.81" lengthAdjust="spacingAndGlyphs">0</text>
<text x="864.68" y="315.65" font-size="8.5" font-weight="bold" stroke="#000" stroke-width="0.18" fill="#000" textLength="103.65" lengthAdjust="spacingAndGlyphs">Block Tag Propagation:</text>
<text x="970.73" y="315.65" font-size="8.5" fill="#000" textLength="10.39" lengthAdjust="spacingAndGlyphs">No</text>
<text x="1062.47" y="271.02" font-size="8.9" font-weight="bold" stroke="#000" stroke-width="0.18" fill="#000" textLength="57.45" lengthAdjust="spacingAndGlyphs">Virtual Sink</text>
<text x="1029.55" y="283.77" font-size="8.5" font-weight="bold" stroke="#000" stroke-width="0.18" fill="#000" textLength="47.95" lengthAdjust="spacingAndGlyphs">Stream ID:</text>
<text x="1079.90" y="283.77" font-size="8.5" fill="#000" textLength="73.35" lengthAdjust="spacingAndGlyphs">input_signal_probe</text>
<text x="126.38" y="443.02" font-size="8.9" font-weight="bold" stroke="#000" stroke-width="0.18" fill="#000" textLength="68.65" lengthAdjust="spacingAndGlyphs">Virtual Source</text>
<text x="99.05" y="455.77" font-size="8.5" font-weight="bold" stroke="#000" stroke-width="0.18" fill="#000" textLength="47.95" lengthAdjust="spacingAndGlyphs">Stream ID:</text>
<text x="149.40" y="455.77" font-size="8.5" fill="#000" textLength="73.35" lengthAdjust="spacingAndGlyphs">input_signal_probe</text>
<text x="293.70" y="423.90" font-size="8.9" font-weight="bold" stroke="#000" stroke-width="0.18" fill="#000" textLength="72.00" lengthAdjust="spacingAndGlyphs">FLL Band-Edge</text>
<text x="272.84" y="436.65" font-size="8.5" font-weight="bold" stroke="#000" stroke-width="0.18" fill="#000" textLength="93.50" lengthAdjust="spacingAndGlyphs">Samples Per Symbol:</text>
<text x="368.74" y="436.65" font-size="8.5" fill="#000" textLength="4.81" lengthAdjust="spacingAndGlyphs">4</text>
<text x="272.84" y="449.40" font-size="8.5" font-weight="bold" stroke="#000" stroke-width="0.18" fill="#000" textLength="89.35" lengthAdjust="spacingAndGlyphs">Filter Rolloff Factor:</text>
<text x="364.59" y="449.40" font-size="8.5" fill="#000" textLength="22.38" lengthAdjust="spacingAndGlyphs">350m</text>
<text x="272.84" y="462.15" font-size="8.5" font-weight="bold" stroke="#000" stroke-width="0.18" fill="#000" textLength="95.89" lengthAdjust="spacingAndGlyphs">Prototype Filter Size:</text>
<text x="371.13" y="462.15" font-size="8.5" fill="#000" textLength="9.59" lengthAdjust="spacingAndGlyphs">44</text>
<text x="272.84" y="474.90" font-size="8.5" font-weight="bold" stroke="#000" stroke-width="0.18" fill="#000" textLength="75.12" lengthAdjust="spacingAndGlyphs">Loop Bandwidth:</text>
<text x="350.35" y="474.90" font-size="8.5" fill="#000" textLength="4.81" lengthAdjust="spacingAndGlyphs">0</text>
<text x="570.30" y="366.77" font-size="8.9" font-weight="bold" stroke="#000" stroke-width="0.18" fill="#000" textLength="104.81" lengthAdjust="spacingAndGlyphs">Polyphase Clock Sync</text>
<text x="558.17" y="379.52" font-size="8.5" font-weight="bold" stroke="#000" stroke-width="0.18" fill="#000" textLength="76.72" lengthAdjust="spacingAndGlyphs">Samples/Symbol:</text>
<text x="637.29" y="379.52" font-size="8.5" fill="#000" textLength="4.81" lengthAdjust="spacingAndGlyphs">4</text>
<text x="558.17" y="392.27" font-size="8.5" font-weight="bold" stroke="#000" stroke-width="0.18" fill="#000" textLength="75.12" lengthAdjust="spacingAndGlyphs">Loop Bandwidth:</text>
<text x="635.69" y="392.27" font-size="8.5" fill="#000" textLength="39.16" lengthAdjust="spacingAndGlyphs">62.8319m</text>
<text x="558.17" y="405.02" font-size="8.5" font-weight="bold" stroke="#000" stroke-width="0.18" fill="#000" textLength="23.75" lengthAdjust="spacingAndGlyphs">Taps:</text>
<text x="584.33" y="405.02" font-size="8.5" fill="#000" textLength="26.87" lengthAdjust="spacingAndGlyphs">rrctaps</text>
<text x="558.17" y="417.77" font-size="8.5" font-weight="bold" stroke="#000" stroke-width="0.18" fill="#000" textLength="47.96" lengthAdjust="spacingAndGlyphs">Filter Size:</text>
<text x="608.53" y="417.77" font-size="8.5" fill="#000" textLength="9.59" lengthAdjust="spacingAndGlyphs">32</text>
<text x="558.17" y="430.52" font-size="8.5" font-weight="bold" stroke="#000" stroke-width="0.18" fill="#000" textLength="58.34" lengthAdjust="spacingAndGlyphs">Initial Phase:</text>
<text x="618.91" y="430.52" font-size="8.5" fill="#000" textLength="9.59" lengthAdjust="spacingAndGlyphs">16</text>
<text x="558.17" y="443.27" font-size="8.5" font-weight="bold" stroke="#000" stroke-width="0.18" fill="#000" textLength="115.06" lengthAdjust="spacingAndGlyphs">Maximum Rate Deviation:</text>
<text x="675.63" y="443.27" font-size="8.5" fill="#000" textLength="12.00" lengthAdjust="spacingAndGlyphs">1.5</text>
<text x="558.17" y="456.02" font-size="8.5" font-weight="bold" stroke="#000" stroke-width="0.18" fill="#000" textLength="54.34" lengthAdjust="spacingAndGlyphs">Output SPS:</text>
<text x="614.91" y="456.02" font-size="8.5" fill="#000" textLength="4.81" lengthAdjust="spacingAndGlyphs">1</text>
<text x="781.90" y="398.65" font-size="8.9" font-weight="bold" stroke="#000" stroke-width="0.18" fill="#000" textLength="57.61" lengthAdjust="spacingAndGlyphs">Costas Loop</text>
<text x="769.74" y="411.40" font-size="8.5" font-weight="bold" stroke="#000" stroke-width="0.18" fill="#000" textLength="75.12" lengthAdjust="spacingAndGlyphs">Loop Bandwidth:</text>
<text x="847.26" y="411.40" font-size="8.5" fill="#000" textLength="4.81" lengthAdjust="spacingAndGlyphs">0</text>
<text x="769.74" y="424.15" font-size="8.5" font-weight="bold" stroke="#000" stroke-width="0.18" fill="#000" textLength="29.58" lengthAdjust="spacingAndGlyphs">Order:</text>
<text x="801.72" y="424.15" font-size="8.5" fill="#000" textLength="4.81" lengthAdjust="spacingAndGlyphs">4</text>
<text x="900.89" y="360.15" font-size="8.9" font-weight="bold" stroke="#000" stroke-width="0.18" fill="#000" textLength="125.61" lengthAdjust="spacingAndGlyphs">QT GUI Constellation Sink</text>
<text x="901.09" y="372.90" font-size="8.5" font-weight="bold" stroke="#000" stroke-width="0.18" fill="#000" textLength="79.91" lengthAdjust="spacingAndGlyphs">Number of Points:</text>
<text x="983.41" y="372.90" font-size="8.5" fill="#000" textLength="26.38" lengthAdjust="spacingAndGlyphs">1.024k</text>
<text x="901.09" y="385.65" font-size="8.5" font-weight="bold" stroke="#000" stroke-width="0.18" fill="#000" textLength="47.94" lengthAdjust="spacingAndGlyphs">Autoscale:</text>
<text x="951.44" y="385.65" font-size="8.5" fill="#000" textLength="10.39" lengthAdjust="spacingAndGlyphs">No</text>
<text x="563.47" y="487.90" font-size="8.9" font-weight="bold" stroke="#000" stroke-width="0.18" fill="#000" textLength="111.46" lengthAdjust="spacingAndGlyphs">QT GUI Frequency Sink</text>
<text x="563.31" y="500.65" font-size="8.5" font-weight="bold" stroke="#000" stroke-width="0.18" fill="#000" textLength="28.78" lengthAdjust="spacingAndGlyphs">Name:</text>
<text x="594.49" y="500.65" font-size="8.5" fill="#000" textLength="76.43" lengthAdjust="spacingAndGlyphs">Post-sync spectrum</text>
<text x="563.31" y="513.40" font-size="8.5" font-weight="bold" stroke="#000" stroke-width="0.18" fill="#000" textLength="40.76" lengthAdjust="spacingAndGlyphs">FFT Size:</text>
<text x="606.47" y="513.40" font-size="8.5" fill="#000" textLength="26.38" lengthAdjust="spacingAndGlyphs">1.024k</text>
<text x="563.31" y="526.15" font-size="8.5" font-weight="bold" stroke="#000" stroke-width="0.18" fill="#000" textLength="104.98" lengthAdjust="spacingAndGlyphs">Center Frequency (Hz):</text>
<text x="670.69" y="526.15" font-size="8.5" fill="#000" textLength="4.81" lengthAdjust="spacingAndGlyphs">0</text>
<text x="563.31" y="538.90" font-size="8.5" font-weight="bold" stroke="#000" stroke-width="0.18" fill="#000" textLength="72.72" lengthAdjust="spacingAndGlyphs">Bandwidth (Hz):</text>
<text x="638.43" y="538.90" font-size="8.5" fill="#000" textLength="19.19" lengthAdjust="spacingAndGlyphs">128k</text>
<text x="102.34" y="551.77" font-size="8.9" font-weight="bold" stroke="#000" stroke-width="0.18" fill="#000" textLength="91.71" lengthAdjust="spacingAndGlyphs">QT GUI Tab Widget</text>
<text x="98.63" y="564.52" font-size="8.5" font-weight="bold" stroke="#000" stroke-width="0.18" fill="#000" textLength="46.12" lengthAdjust="spacingAndGlyphs">Num Tabs:</text>
<text x="147.16" y="564.52" font-size="8.5" fill="#000" textLength="4.81" lengthAdjust="spacingAndGlyphs">2</text>
<text x="98.63" y="577.27" font-size="8.5" font-weight="bold" stroke="#000" stroke-width="0.18" fill="#000" textLength="35.16" lengthAdjust="spacingAndGlyphs">Label 0:</text>
<text x="136.20" y="577.27" font-size="8.5" fill="#000" textLength="59.14" lengthAdjust="spacingAndGlyphs">Synched Signal</text>
<text x="98.63" y="590.02" font-size="8.5" font-weight="bold" stroke="#000" stroke-width="0.18" fill="#000" textLength="35.16" lengthAdjust="spacingAndGlyphs">Label 1:</text>
<text x="136.20" y="590.02" font-size="8.5" fill="#000" textLength="61.97" lengthAdjust="spacingAndGlyphs">Received Signal</text>
<text x="104.60" y="615.15" font-size="8.9" font-weight="bold" stroke="#000" stroke-width="0.18" fill="#000" textLength="67.21" lengthAdjust="spacingAndGlyphs">QT GUI Range</text>
<text x="97.69" y="627.90" font-size="8.5" font-weight="bold" stroke="#000" stroke-width="0.18" fill="#000" textLength="12.00" lengthAdjust="spacingAndGlyphs">Id:</text>
<text x="112.10" y="627.90" font-size="8.5" fill="#000" textLength="41.56" lengthAdjust="spacingAndGlyphs">interpratio</text>
<text x="97.69" y="640.65" font-size="8.5" font-weight="bold" stroke="#000" stroke-width="0.18" fill="#000" textLength="27.17" lengthAdjust="spacingAndGlyphs">Label:</text>
<text x="127.27" y="640.65" font-size="8.5" fill="#000" textLength="51.83" lengthAdjust="spacingAndGlyphs">Tming Offset</text>
<text x="97.69" y="653.40" font-size="8.5" font-weight="bold" stroke="#000" stroke-width="0.18" fill="#000" textLength="63.50" lengthAdjust="spacingAndGlyphs">Default Value:</text>
<text x="163.60" y="653.40" font-size="8.5" fill="#000" textLength="4.81" lengthAdjust="spacingAndGlyphs">1</text>
<text x="97.69" y="666.15" font-size="8.5" font-weight="bold" stroke="#000" stroke-width="0.18" fill="#000" textLength="26.38" lengthAdjust="spacingAndGlyphs">Start:</text>
<text x="126.48" y="666.15" font-size="8.5" fill="#000" textLength="22.38" lengthAdjust="spacingAndGlyphs">990m</text>
<text x="97.69" y="678.90" font-size="8.5" font-weight="bold" stroke="#000" stroke-width="0.18" fill="#000" textLength="23.98" lengthAdjust="spacingAndGlyphs">Stop:</text>
<text x="124.08" y="678.90" font-size="8.5" fill="#000" textLength="16.79" lengthAdjust="spacingAndGlyphs">1.01</text>
<text x="97.69" y="691.65" font-size="8.5" font-weight="bold" stroke="#000" stroke-width="0.18" fill="#000" textLength="23.99" lengthAdjust="spacingAndGlyphs">Step:</text>
<text x="124.09" y="691.65" font-size="8.5" fill="#000" textLength="12.80" lengthAdjust="spacingAndGlyphs">1m</text>
<text x="251.10" y="615.15" font-size="8.9" font-weight="bold" stroke="#000" stroke-width="0.18" fill="#000" textLength="67.21" lengthAdjust="spacingAndGlyphs">QT GUI Range</text>
<text x="240.94" y="627.90" font-size="8.5" font-weight="bold" stroke="#000" stroke-width="0.18" fill="#000" textLength="12.00" lengthAdjust="spacingAndGlyphs">Id:</text>
<text x="255.34" y="627.90" font-size="8.5" fill="#000" textLength="30.99" lengthAdjust="spacingAndGlyphs">freq_bw</text>
<text x="240.94" y="640.65" font-size="8.5" font-weight="bold" stroke="#000" stroke-width="0.18" fill="#000" textLength="27.17" lengthAdjust="spacingAndGlyphs">Label:</text>
<text x="270.52" y="640.65" font-size="8.5" fill="#000" textLength="58.34" lengthAdjust="spacingAndGlyphs">FLL Bandwidth</text>
<text x="240.94" y="653.40" font-size="8.5" font-weight="bold" stroke="#000" stroke-width="0.18" fill="#000" textLength="63.50" lengthAdjust="spacingAndGlyphs">Default Value:</text>
<text x="306.84" y="653.40" font-size="8.5" fill="#000" textLength="4.81" lengthAdjust="spacingAndGlyphs">0</text>
<text x="240.94" y="666.15" font-size="8.5" font-weight="bold" stroke="#000" stroke-width="0.18" fill="#000" textLength="26.38" lengthAdjust="spacingAndGlyphs">Start:</text>
<text x="269.72" y="666.15" font-size="8.5" fill="#000" textLength="4.81" lengthAdjust="spacingAndGlyphs">0</text>
<text x="240.94" y="678.90" font-size="8.5" font-weight="bold" stroke="#000" stroke-width="0.18" fill="#000" textLength="23.98" lengthAdjust="spacingAndGlyphs">Stop:</text>
<text x="267.32" y="678.90" font-size="8.5" fill="#000" textLength="17.59" lengthAdjust="spacingAndGlyphs">50m</text>
<text x="240.94" y="691.65" font-size="8.5" font-weight="bold" stroke="#000" stroke-width="0.18" fill="#000" textLength="23.99" lengthAdjust="spacingAndGlyphs">Step:</text>
<text x="267.33" y="691.65" font-size="8.5" fill="#000" textLength="19.18" lengthAdjust="spacingAndGlyphs">100u</text>
<text x="394.60" y="615.15" font-size="8.9" font-weight="bold" stroke="#000" stroke-width="0.18" fill="#000" textLength="67.21" lengthAdjust="spacingAndGlyphs">QT GUI Range</text>
<text x="380.09" y="627.90" font-size="8.5" font-weight="bold" stroke="#000" stroke-width="0.18" fill="#000" textLength="12.00" lengthAdjust="spacingAndGlyphs">Id:</text>
<text x="394.49" y="627.90" font-size="8.5" fill="#000" textLength="42.86" lengthAdjust="spacingAndGlyphs">freq_offset</text>
<text x="380.09" y="640.65" font-size="8.5" font-weight="bold" stroke="#000" stroke-width="0.18" fill="#000" textLength="27.17" lengthAdjust="spacingAndGlyphs">Label:</text>
<text x="409.67" y="640.65" font-size="8.5" fill="#000" textLength="67.05" lengthAdjust="spacingAndGlyphs">Frequency Offset</text>
<text x="380.09" y="653.40" font-size="8.5" font-weight="bold" stroke="#000" stroke-width="0.18" fill="#000" textLength="63.50" lengthAdjust="spacingAndGlyphs">Default Value:</text>
<text x="445.99" y="653.40" font-size="8.5" fill="#000" textLength="4.81" lengthAdjust="spacingAndGlyphs">0</text>
<text x="380.09" y="666.15" font-size="8.5" font-weight="bold" stroke="#000" stroke-width="0.18" fill="#000" textLength="26.38" lengthAdjust="spacingAndGlyphs">Start:</text>
<text x="408.87" y="666.15" font-size="8.5" fill="#000" textLength="25.58" lengthAdjust="spacingAndGlyphs">-500m</text>
<text x="380.09" y="678.90" font-size="8.5" font-weight="bold" stroke="#000" stroke-width="0.18" fill="#000" textLength="23.98" lengthAdjust="spacingAndGlyphs">Stop:</text>
<text x="406.47" y="678.90" font-size="8.5" fill="#000" textLength="22.38" lengthAdjust="spacingAndGlyphs">500m</text>
<text x="380.09" y="691.65" font-size="8.5" font-weight="bold" stroke="#000" stroke-width="0.18" fill="#000" textLength="23.99" lengthAdjust="spacingAndGlyphs">Step:</text>
<text x="406.48" y="691.65" font-size="8.5" fill="#000" textLength="12.80" lengthAdjust="spacingAndGlyphs">1m</text>
<text x="744.38" y="590.02" font-size="8.9" font-weight="bold" stroke="#000" stroke-width="0.18" fill="#000" textLength="68.65" lengthAdjust="spacingAndGlyphs">Virtual Source</text>
<text x="717.05" y="602.77" font-size="8.5" font-weight="bold" stroke="#000" stroke-width="0.18" fill="#000" textLength="47.95" lengthAdjust="spacingAndGlyphs">Stream ID:</text>
<text x="767.40" y="602.77" font-size="8.5" fill="#000" textLength="73.35" lengthAdjust="spacingAndGlyphs">input_signal_probe</text>
<text x="907.39" y="583.15" font-size="8.9" font-weight="bold" stroke="#000" stroke-width="0.18" fill="#000" textLength="125.61" lengthAdjust="spacingAndGlyphs">QT GUI Constellation Sink</text>
<text x="907.59" y="595.90" font-size="8.5" font-weight="bold" stroke="#000" stroke-width="0.18" fill="#000" textLength="79.91" lengthAdjust="spacingAndGlyphs">Number of Points:</text>
<text x="989.91" y="595.90" font-size="8.5" fill="#000" textLength="26.38" lengthAdjust="spacingAndGlyphs">1.024k</text>
<text x="907.59" y="608.65" font-size="8.5" font-weight="bold" stroke="#000" stroke-width="0.18" fill="#000" textLength="47.94" lengthAdjust="spacingAndGlyphs">Autoscale:</text>
<text x="957.94" y="608.65" font-size="8.5" fill="#000" textLength="10.39" lengthAdjust="spacingAndGlyphs">No</text>
<text x="907.97" y="646.90" font-size="8.9" font-weight="bold" stroke="#000" stroke-width="0.18" fill="#000" textLength="111.46" lengthAdjust="spacingAndGlyphs">QT GUI Frequency Sink</text>
<text x="907.81" y="659.65" font-size="8.5" font-weight="bold" stroke="#000" stroke-width="0.18" fill="#000" textLength="28.78" lengthAdjust="spacingAndGlyphs">Name:</text>
<text x="938.99" y="659.65" font-size="8.5" fill="#000" textLength="74.75" lengthAdjust="spacingAndGlyphs">Received spectrum</text>
<text x="907.81" y="672.40" font-size="8.5" font-weight="bold" stroke="#000" stroke-width="0.18" fill="#000" textLength="40.76" lengthAdjust="spacingAndGlyphs">FFT Size:</text>
<text x="950.97" y="672.40" font-size="8.5" fill="#000" textLength="26.38" lengthAdjust="spacingAndGlyphs">1.024k</text>
<text x="907.81" y="685.15" font-size="8.5" font-weight="bold" stroke="#000" stroke-width="0.18" fill="#000" textLength="104.98" lengthAdjust="spacingAndGlyphs">Center Frequency (Hz):</text>
<text x="1015.19" y="685.15" font-size="8.5" fill="#000" textLength="4.81" lengthAdjust="spacingAndGlyphs">0</text>
<text x="907.81" y="697.90" font-size="8.5" font-weight="bold" stroke="#000" stroke-width="0.18" fill="#000" textLength="72.72" lengthAdjust="spacingAndGlyphs">Bandwidth (Hz):</text>
<text x="982.93" y="697.90" font-size="8.5" fill="#000" textLength="19.19" lengthAdjust="spacingAndGlyphs">128k</text>
<rect x="87" y="719.6" width="683" height="126.4" fill="#fff"/>
<text x="87.50" y="738.00" font-size="10.1" fill="#000" textLength="339.77" lengthAdjust="spacingAndGlyphs">Loading: &quot;/home/marcus/CEL/Praktikum/ntp/Matlab/11-SYNC/pam_sync.grc&quot;</text>
<text x="87.50" y="751.30" font-size="10.1" fill="#000" textLength="42.34" lengthAdjust="spacingAndGlyphs">&gt;&gt;&gt; Done</text>
<text x="87.50" y="778.00" font-size="10.1" fill="#000" textLength="414.26" lengthAdjust="spacingAndGlyphs">Loading: &quot;/home/marcus/CEL/Praktikum/ntp/Matlab/11-SYNC-MUSTER/QPSK_rx_MUSTER.grc&quot;</text>
<text x="87.50" y="791.30" font-size="10.1" fill="#000" textLength="42.34" lengthAdjust="spacingAndGlyphs">&gt;&gt;&gt; Done</text>
<text x="87.50" y="818.00" font-size="10.1" fill="#000" textLength="413.77" lengthAdjust="spacingAndGlyphs">Loading: &quot;/home/marcus/CEL/Praktikum/ntp/Matlab/11-SYNC-MUSTER/QPSK_tx_MUSTER.grc&quot;</text>
<text x="87.50" y="831.30" font-size="10.1" fill="#000" textLength="42.34" lengthAdjust="spacingAndGlyphs">&gt;&gt;&gt; Done</text>
<rect x="767.3" y="719.6" width="10.3" height="126.4" fill="#cecece"/>
<rect x="770.8" y="777.5" width="5" height="80" rx="2.5" fill="#7b7f80"/>
<rect x="777.6" y="719.6" width="500" height="126.4" fill="#fff"/>
<text x="782.90" y="733.00" font-size="10.1" font-weight="bold" fill="#919191" textLength="9.63" lengthAdjust="spacingAndGlyphs">Id</text>
<text x="878.00" y="733.00" font-size="10.1" font-weight="bold" fill="#919191" textLength="26.15" lengthAdjust="spacingAndGlyphs">Value</text>
<rect x="873.5" y="721" width="1" height="16" fill="#e4e2df"/>
<rect x="778" y="738.6" width="489" height="1" fill="#efedeb"/>
<path d="M782.5,747 L789.5,747 L786,751 Z" fill="#2e3436"/>
<text x="795.20" y="753.10" font-size="10.1" fill="#000" textLength="35.30" lengthAdjust="spacingAndGlyphs">Imports</text>
<path d="M1258.6,744.5 V753.5 M1254.1,749 H1263.1" stroke="#3864b0" stroke-width="2.4"/>
<text x="809.30" y="771.40" font-size="10.1" fill="#000" textLength="39.61" lengthAdjust="spacingAndGlyphs">import_0</text>
<text x="876.30" y="771.40" font-size="10.1" fill="#000" textLength="90.38" lengthAdjust="spacingAndGlyphs">from math import pi</text>
<path d="M1255.3,764.0 L1261.8999999999999,770.5999999999999 M1261.8999999999999,764.0 L1255.3,770.5999999999999" stroke="#888885" stroke-width="2.4" stroke-linecap="square"/>
<path d="M782.5,783.6 L789.5,783.6 L786,787.6 Z" fill="#2e3436"/>
<text x="795.20" y="789.70" font-size="10.1" fill="#000" textLength="40.42" lengthAdjust="spacingAndGlyphs">Variables</text>
<path d="M1258.6,781.1 V790.1 M1254.1,785.6 H1263.1" stroke="#3864b0" stroke-width="2.4"/>
<text x="809.30" y="808.00" font-size="10.1" fill="#000" textLength="23.97" lengthAdjust="spacingAndGlyphs">const</text>
<text x="876.30" y="808.00" font-size="10.1" fill="#000" textLength="117.84" lengthAdjust="spacingAndGlyphs">digital.qpsk_constellation()</text>
<path d="M1255.3,800.6 L1261.8999999999999,807.1999999999999 M1261.8999999999999,800.6 L1255.3,807.1999999999999" stroke="#888885" stroke-width="2.4" stroke-linecap="square"/>
<text x="809.30" y="826.30" font-size="10.1" fill="#000" textLength="33.98" lengthAdjust="spacingAndGlyphs">def_lbw</text>
<text x="876.30" y="826.30" font-size="10.1" fill="#000" textLength="38.49" lengthAdjust="spacingAndGlyphs">2*pi/100</text>
<path d="M1255.3,818.9000000000001 L1261.8999999999999,825.5 M1261.8999999999999,818.9000000000001 L1255.3,825.5" stroke="#888885" stroke-width="2.4" stroke-linecap="square"/>
<text x="809.30" y="844.60" font-size="10.1" fill="#000" textLength="35.26" lengthAdjust="spacingAndGlyphs">freq_bw</text>
<text x="876.30" y="844.60" font-size="10.1" fill="#1c5fc4" textLength="83.28" lengthAdjust="spacingAndGlyphs">&lt;Open Properties&gt;</text>
<path d="M1255.3,837.2 L1261.8999999999999,843.8 M1261.8999999999999,837.2 L1255.3,843.8" stroke="#888885" stroke-width="2.4" stroke-linecap="square"/>
<rect x="1267.4" y="719.6" width="10.2" height="19.4" fill="#f5f5f4"/>
<rect x="1267.4" y="739" width="10.2" height="107" fill="#cecece"/>
<rect x="1270" y="742" width="5" height="32" rx="2.5" fill="#7b7f80"/>
<rect x="1277.6" y="53" width="138.4" height="793" fill="#fff"/>
<rect x="1415" y="0" width="1" height="53" fill="#fdfdfd"/>
<path d="M1282.9,60.4 L1289.8,60.4 L1286.35,64.7 Z" fill="#2e3436"/>
<text x="1295.60" y="66.30" font-size="10.1" fill="#000" textLength="20.67" lengthAdjust="spacingAndGlyphs">Core</text>
<path d="M1298.8,77.42 L1303,81.12 L1298.8,84.82000000000001 Z" fill="#2e3436"/>
<text x="1310.00" y="84.62" font-size="10.1" fill="#000" textLength="25.77" lengthAdjust="spacingAndGlyphs">Audio</text>
<path d="M1298.8,95.74 L1303,99.44 L1298.8,103.14 Z" fill="#2e3436"/>
<text x="1310.00" y="102.94" font-size="10.1" fill="#000" textLength="83.80" lengthAdjust="spacingAndGlyphs">Boolean Operators</text>
<path d="M1298.8,114.05999999999999 L1303,117.75999999999999 L1298.8,121.46 Z" fill="#2e3436"/>
<text x="1310.00" y="121.26" font-size="10.1" fill="#000" textLength="67.05" lengthAdjust="spacingAndGlyphs">Byte Operators</text>
<path d="M1298.8,132.38 L1303,136.07999999999998 L1298.8,139.77999999999997 Z" fill="#2e3436"/>
<text x="1310.00" y="139.58" font-size="10.1" fill="#000" textLength="57.03" lengthAdjust="spacingAndGlyphs">Channelizers</text>
<path d="M1298.8,150.7 L1303,154.39999999999998 L1298.8,158.09999999999997 Z" fill="#2e3436"/>
<text x="1310.00" y="157.90" font-size="10.1" fill="#000" textLength="71.20" lengthAdjust="spacingAndGlyphs">Channel Models</text>
<path d="M1298.8,169.02 L1303,172.72 L1298.8,176.42 Z" fill="#2e3436"/>
<text x="1310.00" y="176.22" font-size="10.1" fill="#000" textLength="31.50" lengthAdjust="spacingAndGlyphs">Coding</text>
<path d="M1298.8,187.34000000000003 L1303,191.04000000000002 L1298.8,194.74 Z" fill="#2e3436"/>
<text x="1310.00" y="194.54" font-size="10.1" fill="#000" textLength="53.86" lengthAdjust="spacingAndGlyphs">Control Port</text>
<path d="M1298.8,205.66000000000003 L1303,209.36 L1298.8,213.06 Z" fill="#2e3436"/>
<text x="1310.00" y="212.86" font-size="10.1" fill="#000" textLength="54.98" lengthAdjust="spacingAndGlyphs">Debug Tools</text>
<path d="M1298.8,223.98000000000002 L1303,227.68 L1298.8,231.38 Z" fill="#2e3436"/>
<text x="1310.00" y="231.18" font-size="10.1" fill="#000" textLength="51.32" lengthAdjust="spacingAndGlyphs">Deprecated</text>
<path d="M1298.8,242.3 L1303,246.0 L1298.8,249.7 Z" fill="#2e3436"/>
<text x="1310.00" y="249.50" font-size="10.1" fill="#000" textLength="74.23" lengthAdjust="spacingAndGlyphs">Digital Television</text>
<path d="M1298.8,260.62 L1303,264.32 L1298.8,268.02 Z" fill="#2e3436"/>
<text x="1310.00" y="267.82" font-size="10.1" fill="#000" textLength="45.15" lengthAdjust="spacingAndGlyphs">Equalizers</text>
<path d="M1298.8,278.94 L1303,282.64 L1298.8,286.34 Z" fill="#2e3436"/>
<text x="1310.00" y="286.14" font-size="10.1" fill="#000" textLength="56.37" lengthAdjust="spacingAndGlyphs">Error Coding</text>
<path d="M1298.8,297.26 L1303,300.96 L1298.8,304.65999999999997 Z" fill="#2e3436"/>
<text x="1310.00" y="304.46" font-size="10.1" fill="#000" textLength="62.48" lengthAdjust="spacingAndGlyphs">File Operators</text>
<path d="M1298.8,315.58000000000004 L1303,319.28000000000003 L1298.8,322.98 Z" fill="#2e3436"/>
<text x="1310.00" y="322.78" font-size="10.1" fill="#000" textLength="26.88" lengthAdjust="spacingAndGlyphs">Filters</text>
<path d="M1298.8,333.90000000000003 L1303,337.6 L1298.8,341.3 Z" fill="#2e3436"/>
<text x="1310.00" y="341.10" font-size="10.1" fill="#000" textLength="70.21" lengthAdjust="spacingAndGlyphs">Fourier Analysis</text>
<path d="M1298.8,352.22 L1303,355.92 L1298.8,359.62 Z" fill="#2e3436"/>
<text x="1310.00" y="359.42" font-size="10.1" fill="#000" textLength="55.41" lengthAdjust="spacingAndGlyphs">GUI Widgets</text>
<path d="M1298.8,370.54 L1303,374.24 L1298.8,377.94 Z" fill="#2e3436"/>
<text x="1310.00" y="377.74" font-size="10.1" fill="#000" textLength="87.51" lengthAdjust="spacingAndGlyphs">Impairment Models</text>
<path d="M1298.8,388.86 L1303,392.56 L1298.8,396.26 Z" fill="#2e3436"/>
<text x="1310.00" y="396.06" font-size="10.1" fill="#000" textLength="72.64" lengthAdjust="spacingAndGlyphs">Instrumentation</text>
<path d="M1298.8,407.18 L1303,410.88 L1298.8,414.58 Z" fill="#2e3436"/>
<text x="1310.00" y="414.38" font-size="10.1" fill="#000" textLength="73.90" lengthAdjust="spacingAndGlyphs">Level Controllers</text>
<path d="M1298.8,425.5 L1303,429.2 L1298.8,432.9 Z" fill="#2e3436"/>
<text x="1310.00" y="432.70" font-size="10.1" fill="#000" textLength="70.46" lengthAdjust="spacingAndGlyphs">Math Operators</text>
<path d="M1298.8,443.82000000000005 L1303,447.52000000000004 L1298.8,451.22 Z" fill="#2e3436"/>
<text x="1310.00" y="451.02" font-size="10.1" fill="#000" textLength="87.22" lengthAdjust="spacingAndGlyphs">Measurement Tools</text>
<path d="M1298.8,462.14000000000004 L1303,465.84000000000003 L1298.8,469.54 Z" fill="#2e3436"/>
<text x="1310.00" y="469.34" font-size="10.1" fill="#000" textLength="64.66" lengthAdjust="spacingAndGlyphs">Message Tools</text>
<path d="M1298.8,480.46000000000004 L1303,484.16 L1298.8,487.86 Z" fill="#2e3436"/>
<text x="1310.00" y="487.66" font-size="10.1" fill="#000" textLength="20.03" lengthAdjust="spacingAndGlyphs">Misc</text>
<path d="M1298.8,498.78000000000003 L1303,502.48 L1298.8,506.18 Z" fill="#2e3436"/>
<text x="1310.00" y="505.98" font-size="10.1" fill="#000" textLength="51.08" lengthAdjust="spacingAndGlyphs">Modulators</text>
<path d="M1298.8,517.0999999999999 L1303,520.8 L1298.8,524.5 Z" fill="#2e3436"/>
<text x="1310.00" y="524.30" font-size="10.1" fill="#000" textLength="77.33" lengthAdjust="spacingAndGlyphs">Networking Tools</text>
<path d="M1298.8,535.42 L1303,539.12 L1298.8,542.82 Z" fill="#2e3436"/>
<text x="1310.00" y="542.62" font-size="10.1" fill="#000" textLength="27.68" lengthAdjust="spacingAndGlyphs">OFDM</text>
<path d="M1298.8,553.7399999999999 L1303,557.4399999999999 L1298.8,561.14 Z" fill="#2e3436"/>
<text x="1310.00" y="560.94" font-size="10.1" fill="#000" textLength="76.67" lengthAdjust="spacingAndGlyphs">Packet Operators</text>
<path d="M1298.8,572.06 L1303,575.76 L1298.8,579.46 Z" fill="#2e3436"/>
<text x="1310.00" y="579.26" font-size="10.1" fill="#000" textLength="66.72" lengthAdjust="spacingAndGlyphs">Peak Detectors</text>
<path d="M1298.8,590.3799999999999 L1303,594.0799999999999 L1298.8,597.78 Z" fill="#2e3436"/>
<text x="1310.00" y="597.58" font-size="10.1" fill="#000" textLength="51.73" lengthAdjust="spacingAndGlyphs">Resamplers</text>
<path d="M1298.8,608.6999999999999 L1303,612.4 L1298.8,616.1 Z" fill="#2e3436"/>
<text x="1310.00" y="615.90" font-size="10.1" fill="#000" textLength="79.10" lengthAdjust="spacingAndGlyphs">Stream Operators</text>
<path d="M1298.8,627.0199999999999 L1303,630.7199999999999 L1298.8,634.42 Z" fill="#2e3436"/>
<text x="1310.00" y="634.22" font-size="10.1" fill="#000" textLength="75.07" lengthAdjust="spacingAndGlyphs">Stream Tag Tools</text>
<path d="M1298.8,645.3399999999999 L1303,649.04 L1298.8,652.74 Z" fill="#2e3436"/>
<text x="1310.00" y="652.54" font-size="10.1" fill="#000" textLength="66.66" lengthAdjust="spacingAndGlyphs">Symbol Coding</text>
<path d="M1298.8,663.66 L1303,667.36 L1298.8,671.0600000000001 Z" fill="#2e3436"/>
<text x="1310.00" y="670.86" font-size="10.1" fill="#000" textLength="61.96" lengthAdjust="spacingAndGlyphs">Synchronizers</text>
<path d="M1298.8,681.9799999999999 L1303,685.68 L1298.8,689.38 Z" fill="#2e3436"/>
<text x="1310.00" y="689.18" font-size="10.1" fill="#000" textLength="59.54" lengthAdjust="spacingAndGlyphs">Trellis Coding</text>
<path d="M1298.8,700.3 L1303,704.0 L1298.8,707.7 Z" fill="#2e3436"/>
<text x="1310.00" y="707.50" font-size="10.1" fill="#000" textLength="72.01" lengthAdjust="spacingAndGlyphs">Type Converters</text>
<path d="M1298.8,718.6199999999999 L1303,722.3199999999999 L1298.8,726.02 Z" fill="#2e3436"/>
<text x="1310.00" y="725.82" font-size="10.1" fill="#000" textLength="20.75" lengthAdjust="spacingAndGlyphs">UHD</text>
<path d="M1298.8,736.9399999999999 L1303,740.64 L1298.8,744.34 Z" fill="#2e3436"/>
<text x="1310.00" y="744.14" font-size="10.1" fill="#000" textLength="40.42" lengthAdjust="spacingAndGlyphs">Variables</text>
<path d="M1298.8,755.2599999999999 L1303,758.9599999999999 L1298.8,762.66 Z" fill="#2e3436"/>
<text x="1310.00" y="762.46" font-size="10.1" fill="#000" textLength="24.90" lengthAdjust="spacingAndGlyphs">Video</text>
<path d="M1298.8,773.5799999999999 L1303,777.28 L1298.8,780.98 Z" fill="#2e3436"/>
<text x="1310.00" y="780.78" font-size="10.1" fill="#000" textLength="97.86" lengthAdjust="spacingAndGlyphs">Waveform Generators</text>
<path d="M1298.8,791.8999999999999 L1303,795.5999999999999 L1298.8,799.3 Z" fill="#2e3436"/>
<text x="1310.00" y="799.10" font-size="10.1" fill="#000" textLength="82.96" lengthAdjust="spacingAndGlyphs">ZeroMQ Interfaces</text>
<path d="M1284.2,810.2199999999999 L1288.6,813.92 L1284.2,817.62 Z" fill="#2e3436"/>
<text x="1295.60" y="817.42" font-size="10.1" fill="#000" textLength="95.30" lengthAdjust="spacingAndGlyphs">(no module specified)</text>
</svg></body></html>
